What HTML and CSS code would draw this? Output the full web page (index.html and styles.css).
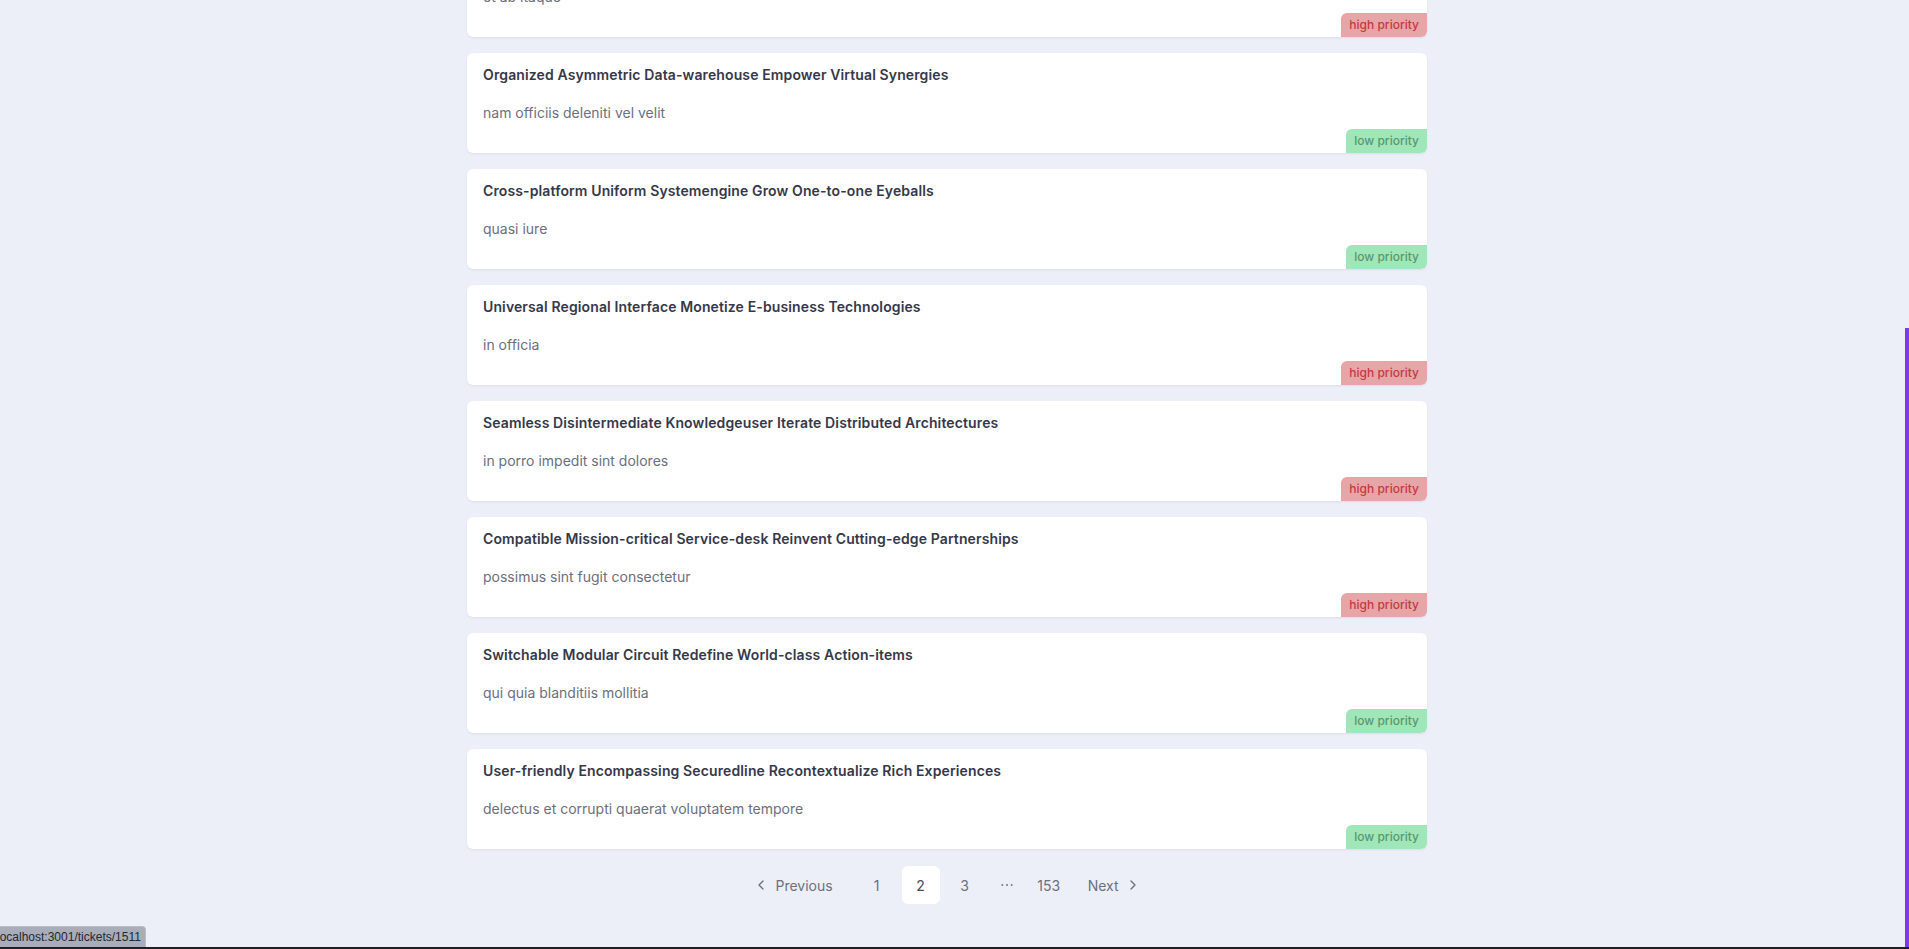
FILE: index.html
```html
<!DOCTYPE html>
<html lang="en">
<head>
<meta charset="utf-8">
<title>Tickets</title>
<link rel="stylesheet" href="styles.css">
</head>
<body>
<main class="page">
  <div class="ticket-list">
    <a class="ticket" href="#">
      <h3 class="ticket-title">Synergistic Dynamic Framework Enable Holistic Paradigms</h3>
      <p class="ticket-desc">et ab itaque</p>
      <span class="badge badge-high">high priority</span>
    </a>
    <a class="ticket" href="#">
      <h3 class="ticket-title">Organized Asymmetric Data-warehouse Empower Virtual Synergies</h3>
      <p class="ticket-desc">nam officiis deleniti vel velit</p>
      <span class="badge badge-low">low priority</span>
    </a>
    <a class="ticket" href="#">
      <h3 class="ticket-title">Cross-platform Uniform Systemengine Grow One-to-one Eyeballs</h3>
      <p class="ticket-desc">quasi iure</p>
      <span class="badge badge-low">low priority</span>
    </a>
    <a class="ticket" href="#">
      <h3 class="ticket-title">Universal Regional Interface Monetize E-business Technologies</h3>
      <p class="ticket-desc">in officia</p>
      <span class="badge badge-high">high priority</span>
    </a>
    <a class="ticket" href="#">
      <h3 class="ticket-title">Seamless Disintermediate Knowledgeuser Iterate Distributed Architectures</h3>
      <p class="ticket-desc">in porro impedit sint dolores</p>
      <span class="badge badge-high">high priority</span>
    </a>
    <a class="ticket" href="#">
      <h3 class="ticket-title">Compatible Mission-critical Service-desk Reinvent Cutting-edge Partnerships</h3>
      <p class="ticket-desc">possimus sint fugit consectetur</p>
      <span class="badge badge-high">high priority</span>
    </a>
    <a class="ticket" href="#">
      <h3 class="ticket-title">Switchable Modular Circuit Redefine World-class Action-items</h3>
      <p class="ticket-desc">qui quia blanditiis mollitia</p>
      <span class="badge badge-low">low priority</span>
    </a>
    <a class="ticket" href="#">
      <h3 class="ticket-title">User-friendly Encompassing Securedline Recontextualize Rich Experiences</h3>
      <p class="ticket-desc">delectus et corrupti quaerat voluptatem tempore</p>
      <span class="badge badge-low">low priority</span>
    </a>
  </div>

  <nav class="pagination">
    <a class="page-btn page-prev" href="#">
      <svg class="chev" viewBox="0 0 24 24" width="16" height="16"><path d="m15 18-6-6 6-6"/></svg>
      <span>Previous</span>
    </a>
    <a class="page-btn page-num" href="#">1</a>
    <a class="page-btn page-num active" href="#">2</a>
    <a class="page-btn page-num" href="#">3</a>
    <span class="page-btn page-dots">
      <svg viewBox="0 0 24 24" width="16" height="16"><circle cx="12" cy="12" r="1"/><circle cx="19" cy="12" r="1"/><circle cx="5" cy="12" r="1"/></svg>
    </span>
    <a class="page-btn page-num" href="#">153</a>
    <a class="page-btn page-next" href="#">
      <span>Next</span>
      <svg class="chev" viewBox="0 0 24 24" width="16" height="16"><path d="m9 18 6-6-6-6"/></svg>
    </a>
  </nav>
</main>

<div class="scroll-thumb"></div>
<div class="status-bubble">localhost:3001/tickets/1511</div>
<div class="bottom-edge"></div>
</body>
</html>
```

FILE: styles.css
```css
* { box-sizing: border-box; }

html, body {
  margin: 0;
  height: 949px;
  overflow: hidden;
}

body {
  background: #eceff8;
  font-family: Inter, "Noto Sans", "Liberation Sans", sans-serif;
  padding-right: 15px;
}

.page {
  width: 960px;
  margin: 0 auto;
}

.ticket-list {
  display: flex;
  flex-direction: column;
  gap: 16px;
  margin-top: -63px;
}

.ticket {
  position: relative;
  display: block;
  height: 100px;
  padding: 12px 16px 0;
  background: #ffffff;
  border-radius: 6px;
  box-shadow: 0 1px 2px rgba(30, 40, 70, 0.08);
  text-decoration: none;
}

.ticket-title {
  margin: 0;
  font-size: 14px;
  line-height: 20px;
  font-weight: 600;
  letter-spacing: 0.12px;
  color: #363849;
}

.ticket-desc {
  margin: 18px 0 0;
  font-size: 14px;
  line-height: 20px;
  font-weight: 400;
  color: #6b6f80;
}

.badge {
  position: absolute;
  right: 0;
  bottom: 0;
  height: 24px;
  padding: 0 8px;
  font-size: 12px;
  line-height: 24px;
  font-weight: 500;
  border-top-left-radius: 6px;
  border-bottom-right-radius: 6px;
}

.badge-high {
  background: #e6a6a7;
  color: #c63843;
}

.badge-low {
  background: #9fe7b9;
  color: #5a9670;
}

.pagination {
  display: flex;
  justify-content: center;
  align-items: center;
  gap: 6px;
  margin-top: 17px;
}

.page-btn {
  display: flex;
  align-items: center;
  justify-content: center;
  height: 38px;
  border-radius: 6px;
  font-size: 14px;
  color: #6b6f80;
  text-decoration: none;
}

.page-num {
  width: 38px;
}

.page-dots {
  width: 34px;
}

.page-num.active {
  background: #ffffff;
  color: #474a5a;
}

.page-prev {
  gap: 6px;
  padding: 0 19px 0 10px;
}

.page-next {
  gap: 6px;
  padding: 0 10px 0 14px;
}

.chev {
  fill: none;
  stroke: currentColor;
  stroke-width: 2;
  stroke-linecap: round;
  stroke-linejoin: round;
}

.page-dots svg {
  fill: #6b6f80;
  stroke: #6b6f80;
  stroke-width: 1;
}

.scroll-thumb {
  position: fixed;
  right: 0;
  top: 328px;
  bottom: 2px;
  width: 4px;
  background: #7c3aed;
}

.status-bubble {
  position: fixed;
  left: 0;
  bottom: 2px;
  height: 21px;
  width: 146px;
  background: #a9acb9;
  color: #232733;
  font-family: "Liberation Sans", "DejaVu Sans", sans-serif;
  font-size: 12px;
  line-height: 20px;
  white-space: nowrap;
  overflow: hidden;
  text-indent: -3px;
  border-top-right-radius: 4px;
  border-top: 1px solid #b9bcc8;
  border-right: 1px solid #b9bcc8;
}

.bottom-edge {
  position: fixed;
  left: 0;
  right: 0;
  bottom: 0;
  height: 2px;
  background: #1f1f1f;
}
```
